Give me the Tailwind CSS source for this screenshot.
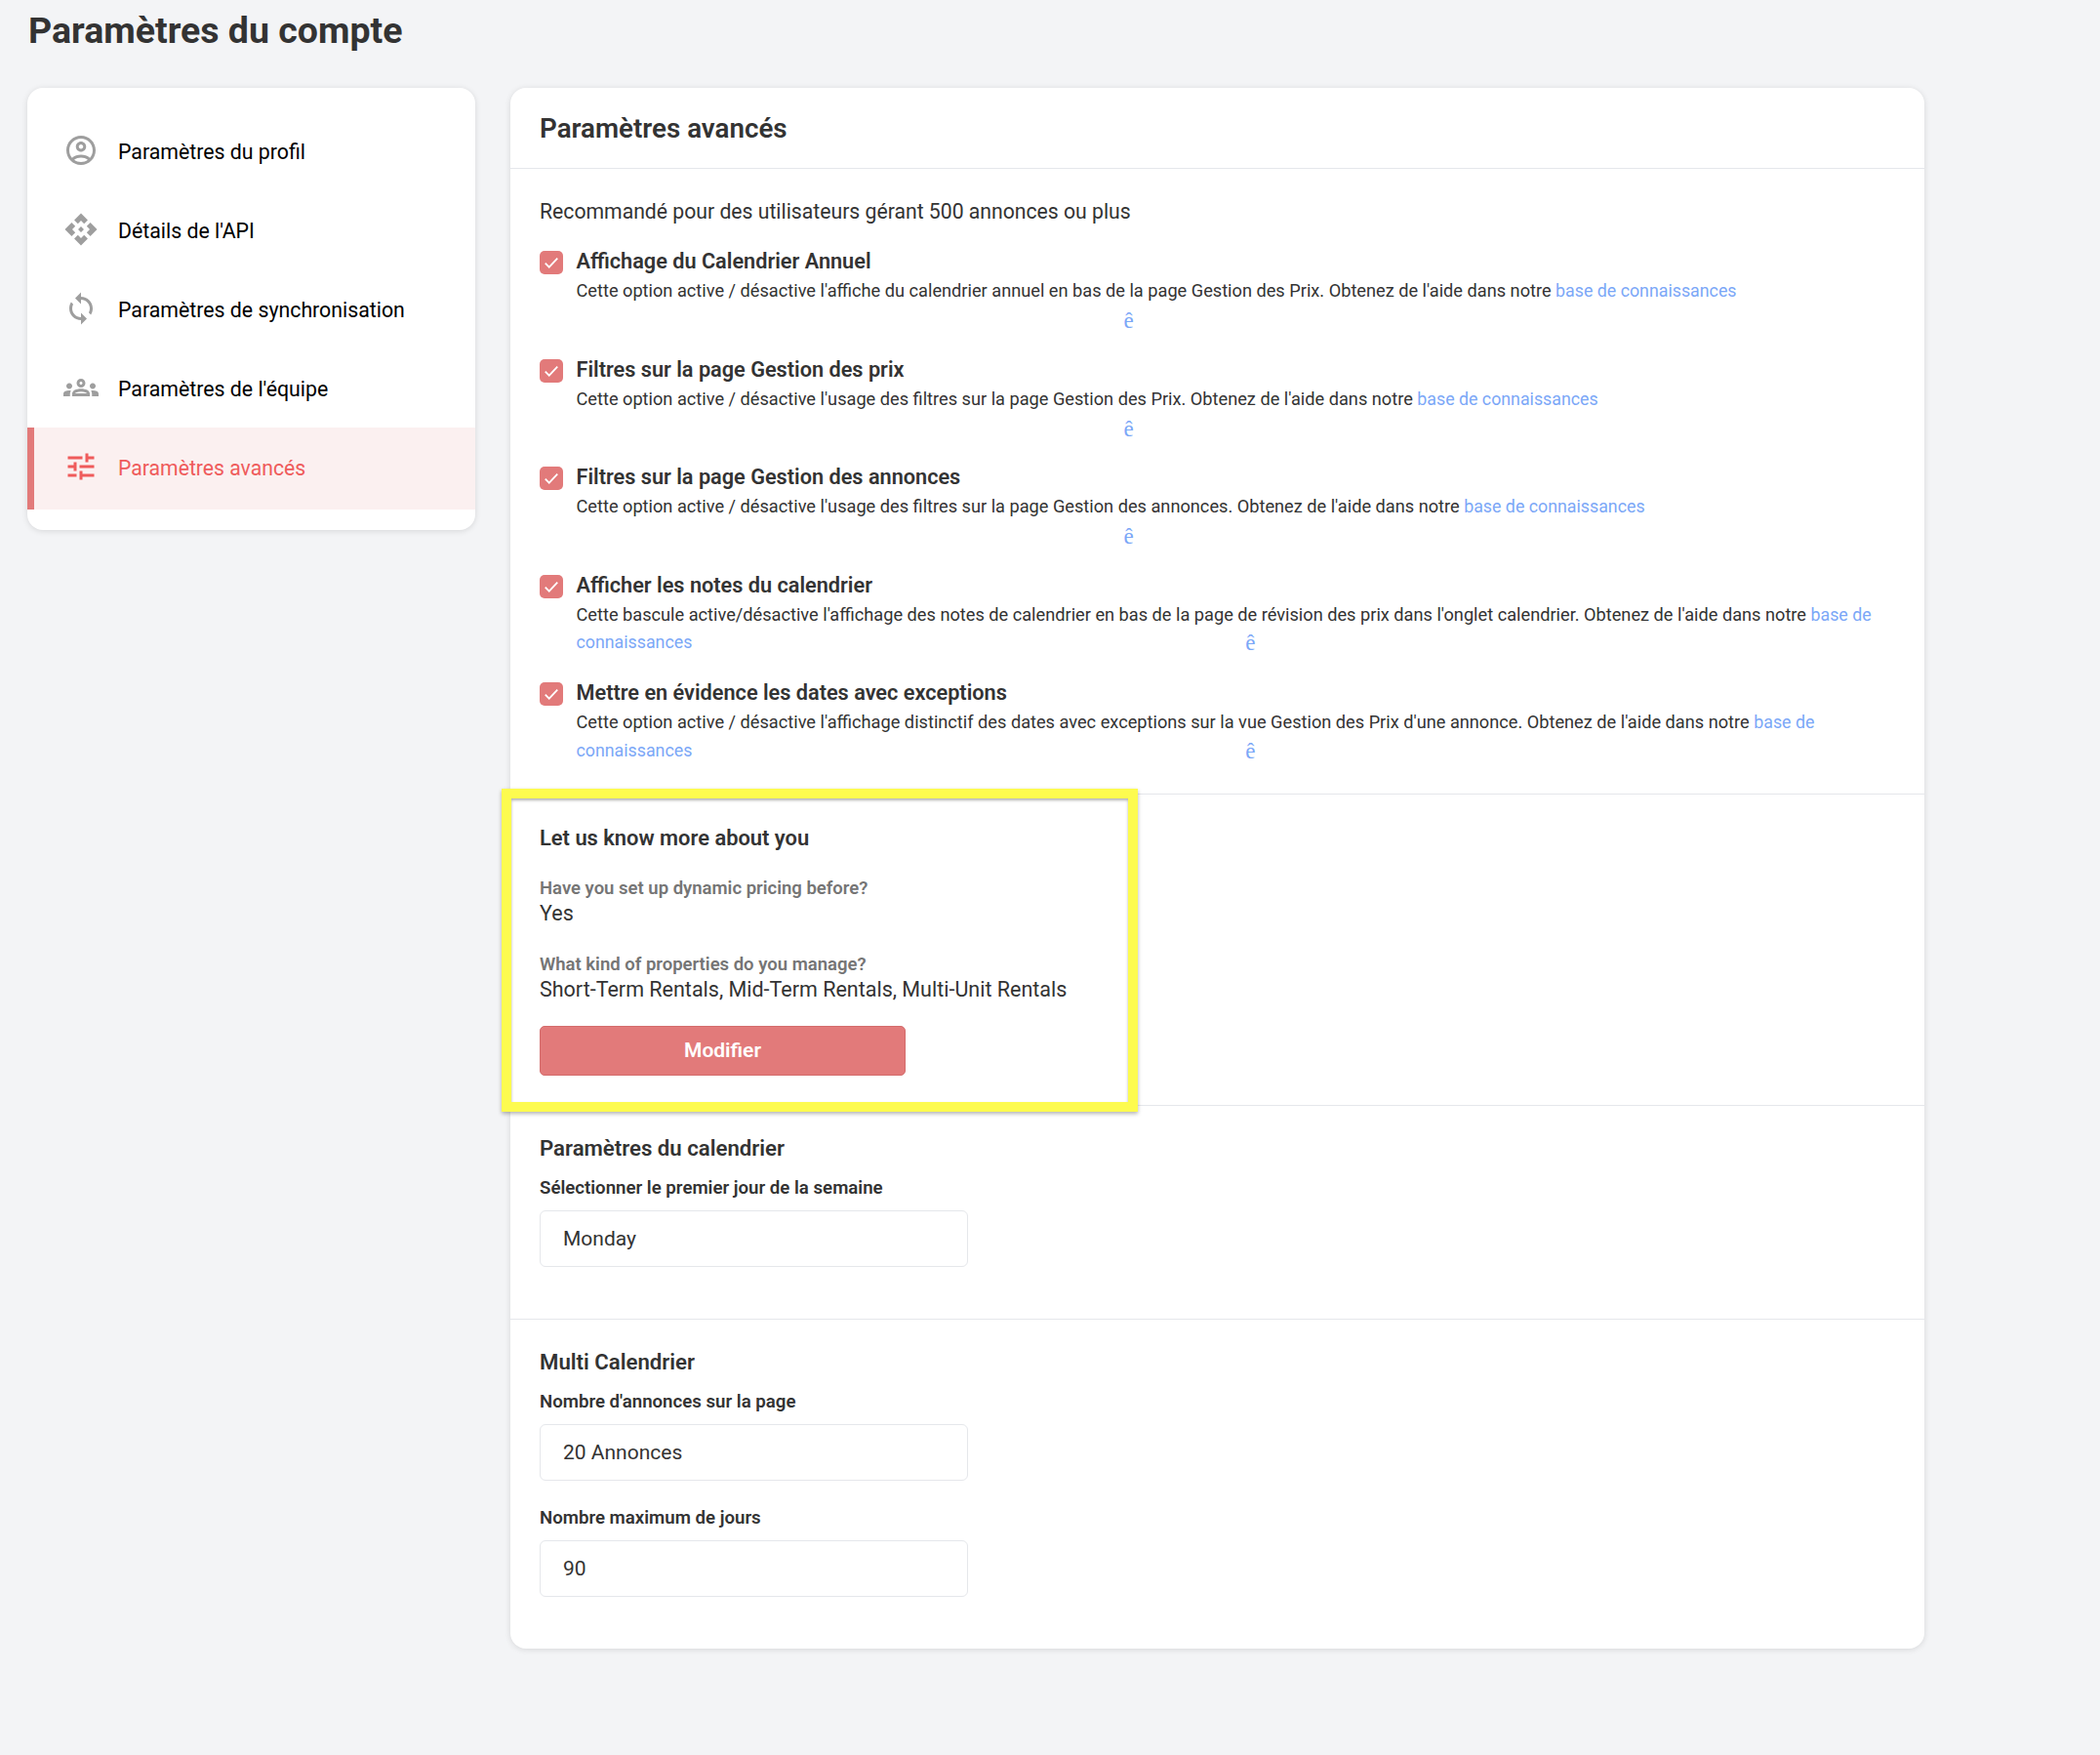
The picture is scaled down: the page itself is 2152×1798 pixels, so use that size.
<!DOCTYPE html>
<html lang="fr">
<head>
  <meta charset="UTF-8">
  <meta name="viewport" content="width=device-width, initial-scale=1.0">
  <title>Paramètres du compte</title>
  <script src="https://cdn.jsdelivr.net/npm/@tailwindcss/browser@4"></script>
</head>
<body class="bg-[#f3f4f6] font-['Roboto',sans-serif] text-[#333]">
<div class="w-[2152px] h-[1798px] overflow-hidden">
  <!-- title -->
  <div class="h-[90px] pl-[29px]">
    <h1 class="text-[37.5px] leading-[62px] font-bold text-[#333]">Paramètres du compte</h1>
  </div>

  <div class="flex items-start pl-[28px] gap-[36px]">
    <!-- sidebar -->
    <div class="w-[459px] h-[453px] bg-white rounded-[16px] shadow-[0_1px_6px_rgba(0,0,0,0.12)] pt-[24px] overflow-hidden text-[21.3px] text-black">
      <a class="h-[81px] flex items-center pl-[37px] gap-[20px]">
        <svg class="w-[36px] h-[36px] mb-[2px] fill-[#9e9e9e]" viewBox="0 0 24 24"><path d="M12 2C6.48 2 2 6.48 2 12s4.48 10 10 10 10-4.48 10-10S17.52 2 12 2zM7.35 18.5C8.66 17.56 10.26 17 12 17s3.34.56 4.65 1.5C15.34 19.44 13.74 20 12 20s-3.34-.56-4.65-1.5zm10.79-1.38C16.45 15.8 14.32 15 12 15s-4.45.8-6.14 2.12C4.7 15.73 4 13.95 4 12c0-4.42 3.58-8 8-8s8 3.58 8 8c0 1.95-.7 3.73-1.86 5.12zM12 6c-1.93 0-3.5 1.57-3.5 3.5S10.07 13 12 13s3.5-1.57 3.5-3.5S13.93 6 12 6zm0 5c-.83 0-1.5-.67-1.5-1.5S11.17 8 12 8s1.5.67 1.5 1.5S12.83 11 12 11z"/></svg>
        <span class="pt-[2px]">Paramètres du profil</span>
      </a>
      <a class="h-[81px] flex items-center pl-[37px] gap-[20px]">
        <svg class="w-[36px] h-[36px] mb-[2px] fill-[#9e9e9e]" viewBox="0 0 24 24"><path d="M14 12l-2 2-2-2 2-2 2 2zm-2-6l2.12 2.12 2.5-2.5L12 1 7.38 5.62l2.5 2.5L12 6zm-6 6l2.12-2.12-2.5-2.5L1 12l4.62 4.62 2.5-2.5L6 12zm12 0l-2.12 2.12 2.5 2.5L23 12l-4.62-4.62-2.5 2.5L18 12zm-6 6l-2.12-2.12-2.5 2.5L12 23l4.62-4.62-2.5-2.5L12 18z"/></svg>
        <span class="pt-[2px]">Détails de l'API</span>
      </a>
      <a class="h-[81px] flex items-center pl-[37px] gap-[20px]">
        <svg class="w-[36px] h-[36px] mb-[2px] fill-[#9e9e9e]" viewBox="0 0 24 24"><path d="M12 4V1L8 5l4 4V6c3.31 0 6 2.69 6 6 0 1.01-.25 1.97-.7 2.8l1.46 1.46C19.54 15.03 20 13.57 20 12c0-4.42-3.58-8-8-8zm0 14c-3.31 0-6-2.69-6-6 0-1.01.25-1.97.7-2.8L5.24 7.74C4.46 8.97 4 10.43 4 12c0 4.42 3.58 8 8 8v3l4-4-4-4v3z"/></svg>
        <span class="pt-[2px]">Paramètres de synchronisation</span>
      </a>
      <a class="h-[81px] flex items-center pl-[37px] gap-[20px]">
        <svg class="w-[36px] h-[36px] mb-[2px] fill-[#9e9e9e]" viewBox="0 0 24 24"><path d="M4 13c1.1 0 2-.9 2-2s-.9-2-2-2-2 .9-2 2 .9 2 2 2zm1.13 1.1c-.37-.06-.74-.1-1.13-.1-.99 0-1.93.21-2.78.58C.48 14.9 0 15.62 0 16.43V18h4.5v-1.61c0-.83.23-1.61.63-2.29zM20 13c1.1 0 2-.9 2-2s-.9-2-2-2-2 .9-2 2 .9 2 2 2zm4 3.43c0-.81-.48-1.53-1.22-1.85-.85-.37-1.79-.58-2.78-.58-.39 0-.76.04-1.13.1.4.68.63 1.46.63 2.29V18H24v-1.57zM16.24 13.65c-1.17-.52-2.61-.9-4.24-.9-1.63 0-3.07.39-4.24.9C6.68 14.13 6 15.21 6 16.39V18h12v-1.61c0-1.18-.68-2.26-1.76-2.74zM8.07 16c.09-.23.13-.39.91-.69.97-.38 1.99-.56 3.02-.56s2.05.18 3.02.56c.77.3.81.46.91.69H8.07zM12 8c.55 0 1 .45 1 1s-.45 1-1 1-1-.45-1-1 .45-1 1-1m0-2c-1.66 0-3 1.34-3 3s1.34 3 3 3 3-1.34 3-3-1.34-3-3-3z"/></svg>
        <span class="pt-[2px]">Paramètres de l'équipe</span>
      </a>
      <a class="h-[84px] flex items-center pl-[30px] gap-[20px] bg-[#fbf0f0] border-l-[7px] border-[#e27a7a] text-[#ef5b5b]">
        <svg class="w-[36px] h-[36px] mb-[4px] fill-[#ef5b5b]" viewBox="0 0 24 24"><path d="M3 17v2h6v-2H3zM3 5v2h10V5H3zm10 16v-2h8v-2h-8v-2h-2v6h2zM7 9v2H3v2h4v2h2V9H7zm14 4v-2H11v2h10zm-6-4h2V7h4V5h-4V3h-2v6z"/></svg>
        <span class="text-[21.2px]">Paramètres avancés</span>
      </a>
    </div>

    <!-- main card -->
    <div class="w-[1449px] h-[1599px] bg-white rounded-[16px] shadow-[0_1px_6px_rgba(0,0,0,0.12)]">
      <div class="h-[83px] border-b border-[#e5e7eb] pl-[30px] pt-[1px] flex items-center">
        <h2 class="text-[27.75px] font-semibold text-[#333]">Paramètres avancés</h2>
      </div>

      <!-- options -->
      <div class="h-[641px] border-b border-[#e5e7eb] px-[30px] pt-[30px]">
        <p class="text-[21.2px] leading-[28px] text-[#333] mb-[24px]">Recommandé pour des utilisateurs gérant 500 annonces ou plus</p>

        <div class="flex gap-[13.5px] h-[110.5px]">
          <span class="mt-[2px] w-[24px] h-[24px] shrink-0 bg-[#e27a7a] rounded-[5px] flex items-center justify-center">
            <svg class="w-[20px] h-[20px]" viewBox="0 0 16 16" fill="none" stroke="white" stroke-width="1.4"><path d="M3 8.5l3.2 3.2L13 4.5"/></svg>
          </span>
          <div>
            <h3 class="text-[21.7px] leading-[26px] font-semibold text-[#333] mb-[3px]">Affichage du Calendrier Annuel</h3>
            <p class="text-[18.2px] leading-[28px] text-[#333]">Cette option active / désactive l'affiche du calendrier annuel en bas de la page Gestion des Prix. Obtenez de l'aide dans notre <a class="text-[17.8px] text-[#7ba7f7]">base de connaissances</a></p>
            <p class="pl-[561px] text-[23px] leading-[33px] text-[#7ba7f7] font-['Liberation_Serif',serif]">ê</p>
          </div>
        </div>

        <div class="flex gap-[13.5px] h-[110.5px]">
          <span class="mt-[2px] w-[24px] h-[24px] shrink-0 bg-[#e27a7a] rounded-[5px] flex items-center justify-center">
            <svg class="w-[20px] h-[20px]" viewBox="0 0 16 16" fill="none" stroke="white" stroke-width="1.4"><path d="M3 8.5l3.2 3.2L13 4.5"/></svg>
          </span>
          <div>
            <h3 class="text-[21.7px] leading-[26px] font-semibold text-[#333] mb-[3px]">Filtres sur la page Gestion des prix</h3>
            <p class="text-[18.2px] leading-[28px] text-[#333]">Cette option active / désactive l'usage des filtres sur la page Gestion des Prix. Obtenez de l'aide dans notre <a class="text-[17.8px] text-[#7ba7f7]">base de connaissances</a></p>
            <p class="pl-[561px] text-[23px] leading-[33px] text-[#7ba7f7] font-['Liberation_Serif',serif]">ê</p>
          </div>
        </div>

        <div class="flex gap-[13.5px] h-[110.5px]">
          <span class="mt-[2px] w-[24px] h-[24px] shrink-0 bg-[#e27a7a] rounded-[5px] flex items-center justify-center">
            <svg class="w-[20px] h-[20px]" viewBox="0 0 16 16" fill="none" stroke="white" stroke-width="1.4"><path d="M3 8.5l3.2 3.2L13 4.5"/></svg>
          </span>
          <div>
            <h3 class="text-[21.7px] leading-[26px] font-semibold text-[#333] mb-[3px]">Filtres sur la page Gestion des annonces</h3>
            <p class="text-[18.2px] leading-[28px] text-[#333]">Cette option active / désactive l'usage des filtres sur la page Gestion des annonces. Obtenez de l'aide dans notre <a class="text-[17.8px] text-[#7ba7f7]">base de connaissances</a></p>
            <p class="pl-[561px] text-[23px] leading-[33px] text-[#7ba7f7] font-['Liberation_Serif',serif]">ê</p>
          </div>
        </div>

        <div class="flex gap-[13.5px] h-[110.5px]">
          <span class="mt-[2px] w-[24px] h-[24px] shrink-0 bg-[#e27a7a] rounded-[5px] flex items-center justify-center">
            <svg class="w-[20px] h-[20px]" viewBox="0 0 16 16" fill="none" stroke="white" stroke-width="1.4"><path d="M3 8.5l3.2 3.2L13 4.5"/></svg>
          </span>
          <div>
            <h3 class="text-[21.7px] leading-[26px] font-semibold text-[#333] mb-[3px]">Afficher les notes du calendrier</h3>
            <p class="text-[18.2px] leading-[27.5px] text-[#333]">Cette bascule active/désactive l'affichage des notes de calendrier en bas de la page de révision des prix dans l'onglet calendrier. Obtenez de l'aide dans notre <a class="text-[17.8px] text-[#7ba7f7]">base de<br>connaissances</a><span class="ml-[567px] text-[23px] leading-[27px] relative top-[2px] text-[#7ba7f7] font-['Liberation_Serif',serif]">ê</span></p>
          </div>
        </div>

        <div class="flex gap-[13.5px] h-[85px]">
          <span class="mt-[2px] w-[24px] h-[24px] shrink-0 bg-[#e27a7a] rounded-[5px] flex items-center justify-center">
            <svg class="w-[20px] h-[20px]" viewBox="0 0 16 16" fill="none" stroke="white" stroke-width="1.4"><path d="M3 8.5l3.2 3.2L13 4.5"/></svg>
          </span>
          <div>
            <h3 class="text-[21.7px] leading-[26px] font-semibold text-[#333] mb-[3px]">Mettre en évidence les dates avec exceptions</h3>
            <p class="text-[18.2px] leading-[27.5px] text-[#333]">Cette option active / désactive l'affichage distinctif des dates avec exceptions sur la vue Gestion des Prix d'une annonce. Obtenez de l'aide dans notre <a class="text-[17.8px] text-[#7ba7f7]">base de<br>connaissances</a><span class="ml-[567px] text-[23px] leading-[27px] relative top-[2px] text-[#7ba7f7] font-['Liberation_Serif',serif]">ê</span></p>
          </div>
        </div>
      </div>

      <!-- let us know -->
      <div class="relative h-[319px] border-b border-[#e5e7eb] px-[30px] pt-[30px]">
        <h3 class="text-[21.9px] leading-[30px] font-semibold text-[#333] mb-[23px]">Let us know more about you</h3>
        <p class="text-[18.5px] leading-[26px] font-semibold text-[#757575]">Have you set up dynamic pricing before?</p>
        <p class="text-[21.5px] leading-[26px] text-[#333] mb-[26px]">Yes</p>
        <p class="text-[18.5px] leading-[26px] font-semibold text-[#757575]">What kind of properties do you manage?</p>
        <p class="text-[21.5px] leading-[26px] text-[#333] mb-[24px]">Short-Term Rentals, Mid-Term Rentals, Multi-Unit Rentals</p>
        <button class="w-[375px] h-[51px] bg-[#e27a7a] border border-[#d46c6c] rounded-[5px] text-white text-[21px] font-semibold">Modifier</button>
        <!-- yellow annotation box -->
        <div class="absolute left-[-9px] top-[-6px] w-[652px] h-[331px] border-[10px] border-[#fdfb4f] shadow-[0_2px_4px_rgba(0,0,0,0.3),inset_0_2px_3px_rgba(0,0,0,0.3)]"></div>
      </div>

      <!-- calendrier -->
      <div class="h-[219px] border-b border-[#e5e7eb] px-[30px] pt-[28px]">
        <h3 class="text-[22.2px] leading-[30px] font-semibold text-[#333] mb-[13px]">Paramètres du calendrier</h3>
        <label class="block text-[18.65px] leading-[26px] font-semibold text-[#333] mb-[10px]">Sélectionner le premier jour de la semaine</label>
        <div class="w-[439px] h-[58px] border border-[#e5e7eb] rounded-[6px] pl-[23px] pt-[1px] flex items-center text-[21px] text-[#333]">Monday</div>
      </div>

      <!-- multi -->
      <div class="px-[30px] pt-[28px]">
        <h3 class="text-[22.2px] leading-[30px] font-semibold text-[#333] mb-[13px]">Multi Calendrier</h3>
        <label class="block text-[18.65px] leading-[26px] font-semibold text-[#333] mb-[10px]">Nombre d'annonces sur la page</label>
        <div class="w-[439px] h-[58px] border border-[#e5e7eb] rounded-[6px] pl-[23px] pt-[1px] flex items-center text-[21px] text-[#333] mb-[25px]">20 Annonces</div>
        <label class="block text-[18.65px] leading-[26px] font-semibold text-[#333] mb-[10px]">Nombre maximum de jours</label>
        <div class="w-[439px] h-[58px] border border-[#e5e7eb] rounded-[6px] pl-[23px] pt-[1px] flex items-center text-[21px] text-[#333]">90</div>
      </div>
    </div>
  </div>
</div>
</body>
</html>
